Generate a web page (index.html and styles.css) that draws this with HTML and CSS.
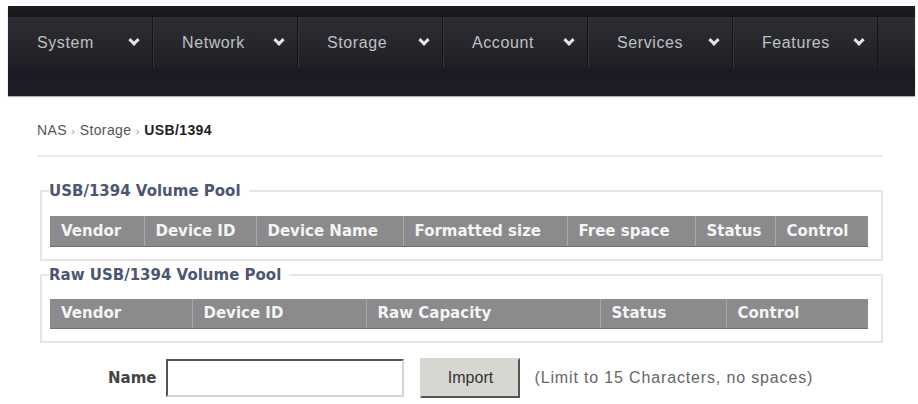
FILE: index.html
```html
<!DOCTYPE html>
<html lang="en">
<head>
    <meta charset="UTF-8">
    <title>NAS - USB/1394</title>
    <link rel="stylesheet" href="styles.css">
</head>
<body>
    <div class="topbar">
        <div class="topbar-strip"></div>
        <ul class="menu">
            <li>System <span class="chev"></span></li>
            <li>Network <span class="chev"></span></li>
            <li>Storage <span class="chev"></span></li>
            <li>Account <span class="chev"></span></li>
            <li>Services <span class="chev"></span></li>
            <li>Features <span class="chev"></span></li>
        </ul>
        <div class="topbar-band"></div>
    </div>

    <div class="content">
        <div class="crumbs">NAS <span class="sep">›</span> Storage <span class="sep">›</span> <b>USB/1394</b></div>

        <fieldset class="pool">
            <legend>USB/1394 Volume Pool</legend>
            <table class="grid">
                <colgroup>
                    <col style="width:94px"><col style="width:112px"><col style="width:147px">
                    <col style="width:164px"><col style="width:128px"><col style="width:80px"><col>
                </colgroup>
                <tr>
                    <th>Vendor</th><th>Device ID</th><th>Device Name</th>
                    <th>Formatted size</th><th>Free space</th><th>Status</th><th>Control</th>
                </tr>
            </table>
        </fieldset>

        <fieldset class="pool raw">
            <legend>Raw USB/1394 Volume Pool</legend>
            <table class="grid">
                <colgroup>
                    <col style="width:142px"><col style="width:174px"><col style="width:234px">
                    <col style="width:126px"><col>
                </colgroup>
                <tr>
                    <th>Vendor</th><th>Device ID</th><th>Raw Capacity</th><th>Status</th><th>Control</th>
                </tr>
            </table>
        </fieldset>

        <form class="import-row">
            <label for="poolName">Name</label>
            <input type="text" id="poolName" name="poolName">
            <button type="button">Import</button>
            <span class="hint">(Limit to 15 Characters, no spaces)</span>
        </form>
    </div>
</body>
</html>
```

FILE: styles.css
```css
* {
    margin: 0;
    padding: 0;
    box-sizing: border-box;
}

body {
    background: #fff;
    font-family: 'Liberation Sans', Arial, sans-serif;
    padding: 6px 3px 0 8px;
}

/* Top navigation */
.topbar {
    background: #1c1d23;
    box-shadow: 0 1px 1px rgba(0, 0, 0, 0.3);
}

.topbar-strip {
    height: 11px;
    background: linear-gradient(#1d1e22, #15161a);
}

.menu {
    list-style: none;
    display: flex;
    height: 51px;
    background: linear-gradient(#2d2e33, #25262b 60%, #1f2025);
}

.menu li {
    width: 145px;
    display: flex;
    align-items: center;
    justify-content: space-between;
    padding: 0 14px 0 29px;
    color: #bfc0c2;
    font-size: 16px;
    letter-spacing: 0.6px;
    border-right: 1px solid #141519;
    box-shadow: inset 1px 0 0 #34353a;
}

.menu li:first-child {
    box-shadow: none;
}

.chev {
    width: 8px;
    height: 8px;
    border-right: 3px solid #e4e4e6;
    border-bottom: 3px solid #e4e4e6;
    transform: rotate(45deg) translate(-2px, -2px);
}

.topbar-band {
    height: 28px;
    background: linear-gradient(#1b1c22, #1d1e26);
}

/* Page body */
.content {
    padding: 0 32px 0 29px;
}

.crumbs {
    font-size: 14px;
    color: #555;
    padding: 26px 0 17px;
    border-bottom: 2px solid #eaeaea;
    letter-spacing: 0.4px;
}

.crumbs b {
    color: #222;
}

.crumbs .sep {
    color: #999;
    font-size: 11px;
}

.pool {
    border: 2px solid #e6e6e6;
    margin: 25px 0 0 3px;
    padding: 16px 13px 12px 8px;
}

.pool.raw {
    margin-top: 5px;
    padding-top: 15px;
}

.pool legend {
    font-family: 'DejaVu Sans', Verdana, sans-serif;
    font-weight: bold;
    font-size: 15px;
    color: #4c5673;
    padding: 0 8px 0 0;
    margin-left: -1px;
}

.grid {
    width: 100%;
    border-collapse: collapse;
    table-layout: fixed;
}

.grid th {
    height: 30px;
    background: #8b8a8d;
    color: #f4f4f4;
    font-family: 'DejaVu Sans', Verdana, sans-serif;
    font-size: 15px;
    font-weight: bold;
    text-align: left;
    padding: 0 11px;
    white-space: nowrap;
    border-left: 1px solid #a9a8ab;
    border-bottom: 1px solid #6f6e72;
}

.grid th:first-child {
    border-left: none;
}

/* Import form */
.import-row {
    display: flex;
    align-items: center;
    margin-top: 15px;
}

.import-row label {
    font-family: 'DejaVu Sans', Verdana, sans-serif;
    font-weight: bold;
    font-size: 15px;
    color: #444;
    margin-left: 71px;
}

.import-row input {
    width: 238px;
    height: 38px;
    margin-left: 10px;
    border: 2px solid #d6d6d6;
    border-top-color: #555;
    border-left-color: #555;
    background: #fff;
}

.import-row button {
    width: 100px;
    height: 40px;
    margin-left: 16px;
    background: #d8d6d1;
    border: 2px solid #d8d6d1;
    border-right-color: #555;
    border-bottom-color: #555;
    font-family: 'Liberation Sans', Arial, sans-serif;
    font-size: 16px;
    color: #333;
}

.import-row .hint {
    margin-left: 14px;
    font-size: 16px;
    color: #666;
    letter-spacing: 0.85px;
}
```
